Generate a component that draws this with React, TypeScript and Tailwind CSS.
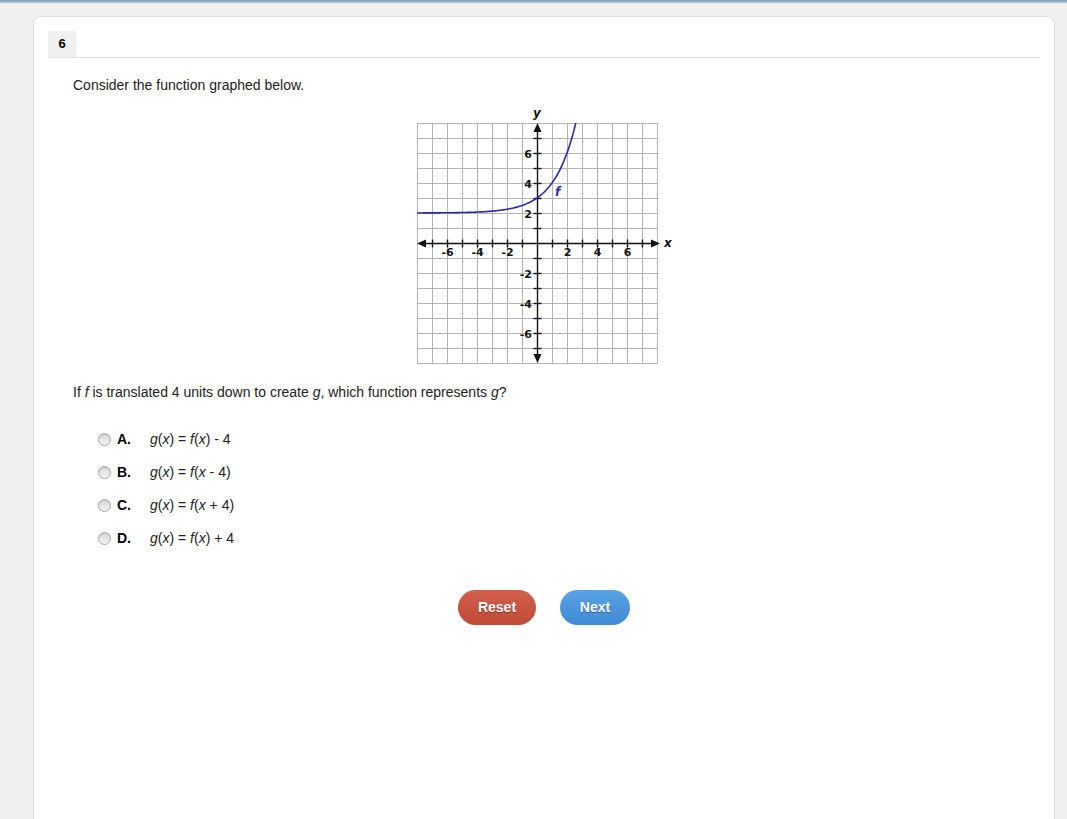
import React from "react";

const ox = 537;
const oy = 243;
const u = 15;

const px = (x: number) => ox + x * u;
const py = (y: number) => oy - y * u;

// f(x) = 2^x + 2, drawn from the left edge until it leaves the grid at y = 8
const curve = (() => {
  const pts: string[] = [];
  const xEnd = Math.log2(6);
  for (let i = 0; i <= 120; i++) {
    const x = -8 + ((xEnd + 8) * i) / 120;
    const y = Math.pow(2, x) + 2;
    pts.push(`${px(x).toFixed(2)},${py(y).toFixed(2)}`);
  }
  return "M" + pts.join(" L");
})();

const ticks = [-7, -6, -5, -4, -3, -2, -1, 1, 2, 3, 4, 5, 6, 7];
const labels = [-6, -4, -2, 2, 4, 6];

const Graph = () => (
  <svg
    width={270}
    height={265}
    viewBox="410 105 270 265"
    className="block"
    style={{ fontFamily: "'DejaVu Sans', Verdana, sans-serif" }}
  >
    {/* grid */}
    {Array.from({ length: 17 }).map((_, i) => (
      <g key={i} stroke="#b4b4b4" strokeWidth={1}>
        <line x1={417.5 + i * 15} y1={123} x2={417.5 + i * 15} y2={363} />
        <line x1={417} y1={123.5 + i * 15} x2={658} y2={123.5 + i * 15} />
      </g>
    ))}

    {/* axes */}
    <g stroke="#111" strokeWidth={1.4}>
      <line x1={424} y1={243.5} x2={652} y2={243.5} />
      <line x1={537.5} y1={131} x2={537.5} y2={355} />
      {ticks.map((t) => (
        <g key={t}>
          <line x1={px(t) + 0.5} y1={239.5} x2={px(t) + 0.5} y2={247.5} />
          <line x1={533.5} y1={py(t) + 0.5} x2={541.5} y2={py(t) + 0.5} />
        </g>
      ))}
    </g>
    <g fill="#111">
      <polygon points="417,243.5 426,239.5 426,247.5" />
      <polygon points="660,243.5 651,239.5 651,247.5" />
      <polygon points="537.5,123 533.5,132 541.5,132" />
      <polygon points="537.5,363 533.5,354 541.5,354" />
    </g>

    {/* tick labels */}
    <g fontSize={11} fontWeight={700} fill="#111">
      {labels.map((l) => (
        <text key={"x" + l} x={px(l) + 0.5} y={256} textAnchor="middle">
          {l < 0 ? "-" + Math.abs(l) : l}
        </text>
      ))}
      {labels.map((l) => (
        <text key={"y" + l} x={532} y={py(l) + 4.5} textAnchor="end">
          {l < 0 ? "-" + Math.abs(l) : l}
        </text>
      ))}
    </g>

    {/* axis names */}
    <text x={664} y={247} fontSize={12} fontWeight={700} fontStyle="italic" fill="#111">
      x
    </text>
    <text x={533} y={117} fontSize={12} fontWeight={700} fontStyle="italic" fill="#111">
      y
    </text>

    {/* function */}
    <path d={curve} fill="none" stroke="#2a2aa6" strokeWidth={1.6} />
    <text x={555} y={196} fontSize={12} fontWeight={700} fontStyle="italic" fill="#2a2aa6">
      f
    </text>
  </svg>
);

const Expr = ({ text }: { text: string }) => {
  // italicise the letters g, f, x; keep operators upright
  return (
    <>
      {text.split("").map((ch, i) =>
        /[gfx]/.test(ch) ? <i key={i}>{ch}</i> : <span key={i}>{ch}</span>
      )}
    </>
  );
};

const options = [
  { key: "A.", expr: "g(x) = f(x) - 4" },
  { key: "B.", expr: "g(x) = f(x - 4)" },
  { key: "C.", expr: "g(x) = f(x + 4)" },
  { key: "D.", expr: "g(x) = f(x) + 4" },
];

export default function App() {
  return (
    <div
      className="w-[1067px] h-[819px] overflow-hidden bg-[#f0f0f0] text-[#222]"
      style={{ fontFamily: "'Liberation Sans', Arial, sans-serif" }}
    >
      {/* top strip */}
      <div className="h-[3px] bg-gradient-to-b from-[#7d9bbd] to-[#b9c9da]" />

      <div className="pl-[33px] pr-[12px] pt-[13px]">
        <div className="bg-white rounded-t-[8px] border border-[#e2e2e2] border-b-0 h-[820px] px-[14px] pt-[14px]">
          {/* header */}
          <div className="border-b border-[#e3e3e3]">
            <div className="w-[28px] h-[26px] bg-[#f0f0f0] flex items-center justify-center text-[13px] font-bold text-black">
              6
            </div>
          </div>

          <div className="pl-[25px]">
            <p className="mt-[18px] text-[14px] leading-[18px] text-[#222]">
              Consider the function graphed below.
            </p>

            <div className="mt-[11px] ml-[337px]">
              <Graph />
            </div>

            <p className="mt-[13px] text-[14px] leading-[18px] text-[#222]">
              If <i>f</i> is translated 4 units down to create <i>g</i>, which function represents{" "}
              <i>g</i>?
            </p>

            <div className="mt-[29px] pl-[25px] flex flex-col gap-[15px]">
              {options.map((o) => (
                <div key={o.key} className="flex items-center h-[18px] text-[14px]">
                  <span className="w-[13px] h-[13px] rounded-full border border-[#a8a8a8] bg-gradient-to-b from-[#d8d8d8] to-[#f4f4f4] shadow-[inset_0_1px_1px_rgba(0,0,0,0.1)]" />
                  <span className="ml-[6px] w-[33px] font-bold text-black">{o.key}</span>
                  <span className="text-[#222]">
                    <Expr text={o.expr} />
                  </span>
                </div>
              ))}
            </div>
          </div>

          <div className="mt-[43px] flex justify-center gap-[24px]">
            <button className="w-[78px] h-[35px] rounded-full bg-gradient-to-b from-[#d2604d] to-[#bf4a37] text-white text-[14px] font-bold [text-shadow:0_1px_1px_rgba(0,0,0,0.35)]">
              Reset
            </button>
            <button className="w-[70px] h-[35px] rounded-full bg-gradient-to-b from-[#5aa3e6] to-[#3f89d4] text-white text-[14px] font-bold [text-shadow:0_1px_1px_rgba(0,0,0,0.35)]">
              Next
            </button>
          </div>
        </div>
      </div>
    </div>
  );
}
